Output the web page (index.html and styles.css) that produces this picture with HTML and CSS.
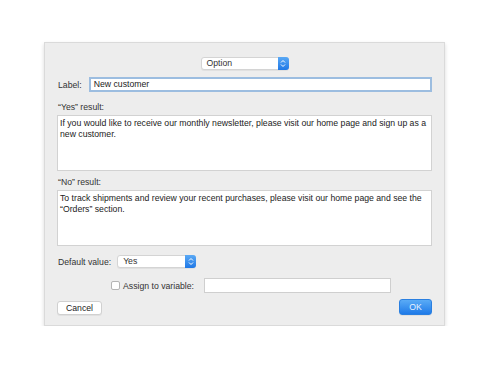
FILE: index.html
```html
<!DOCTYPE html>
<html lang="en">
<head>
    <meta charset="UTF-8">
    <title>Option</title>
    <link rel="stylesheet" href="styles.css">
</head>
<body>
    <div class="dialog">
        <div class="top-row">
            <div class="popup popup-option">
                <span class="popup-text">Option</span>
                <span class="stepper">
                    <svg width="6" height="9" viewBox="0 0 6 9"><path d="M1 3.5 L3 1.5 L5 3.5 M1 5.5 L3 7.5 L5 5.5" fill="none" stroke="#fff" stroke-width="1"/></svg>
                </span>
            </div>
        </div>

        <div class="label-row">
            <span class="field-label">Label:</span>
            <div class="text-field focused">New customer</div>
        </div>

        <div class="section-label">“Yes” result:</div>
        <div class="text-area">If you would like to receive our monthly newsletter, please visit our home page and sign up as a new customer.</div>

        <div class="section-label second">“No” result:</div>
        <div class="text-area">To track shipments and review your recent purchases, please visit our home page and see the “Orders” section.</div>

        <div class="default-row">
            <span class="field-label">Default value:</span>
            <div class="popup popup-default">
                <span class="popup-text">Yes</span>
                <span class="stepper">
                    <svg width="6" height="9" viewBox="0 0 6 9"><path d="M1 3.5 L3 1.5 L5 3.5 M1 5.5 L3 7.5 L5 5.5" fill="none" stroke="#fff" stroke-width="1"/></svg>
                </span>
            </div>
        </div>

        <div class="assign-row">
            <span class="checkbox"></span>
            <span class="field-label">Assign to variable:</span>
            <div class="text-field var-field"></div>
        </div>

        <div class="button-row">
            <div class="button">Cancel</div>
            <div class="button primary">OK</div>
        </div>
    </div>
</body>
</html>
```

FILE: styles.css
```css
body {
    margin: 0;
    background: #fff;
    font-family: "Liberation Sans", Arial, sans-serif;
    font-size: 8.7px;
    color: #333;
}

.dialog {
    margin: 42px 0 0 44px;
    width: 375px;
    padding: 14px 12px 10px 12px;
    background: #ededed;
    border: 1px solid #dadada;
    box-shadow: 0 2px 4px rgba(0, 0, 0, 0.15);
    display: flex;
    flex-direction: column;
}

.top-row {
    display: flex;
    justify-content: center;
}

.popup {
    display: flex;
    align-items: stretch;
    height: 13px;
    background: #fff;
    border: 1px solid #d4d4d4;
    border-radius: 3px;
    box-sizing: border-box;
    box-shadow: 0 1px 0 rgba(0, 0, 0, 0.05);
}

.popup-option {
    width: 88px;
}

.popup-default {
    width: 79px;
    margin-left: 6px;
}

.popup-text {
    flex: 1;
    padding-left: 5px;
    line-height: 11px;
}

.stepper {
    width: 11px;
    margin: -1px -1px -1px 0;
    background: linear-gradient(#5aa9f5, #1f78e6);
    border-radius: 0 3px 3px 0;
    display: flex;
    align-items: center;
    justify-content: center;
}

.label-row {
    display: flex;
    align-items: center;
    margin-top: 7px;
    margin-left: 1px;
}

.text-field {
    background: #fff;
    border: 1px solid #cfcfcf;
    box-sizing: border-box;
    height: 15px;
    line-height: 13px;
    padding-left: 4px;
    color: #222;
}

.label-row .text-field {
    flex: 1;
    margin-left: 7px;
}

.focused {
    border: 2px solid #9cbde0;
    line-height: 11px;
    padding-left: 3px;
}

.section-label {
    margin-top: 10px;
    margin-left: 1px;
    line-height: 11px;
}

.section-label.second {
    margin-top: 6px;
}

.text-area {
    margin-top: 2px;
    height: 56px;
    box-sizing: border-box;
    background: #fff;
    border: 1px solid #d2d2d2;
    padding: 2px 2px;
    line-height: 11px;
    color: #222;
}

.default-row {
    display: flex;
    align-items: center;
    margin-top: 9px;
    margin-left: 1px;
}

.assign-row {
    display: flex;
    align-items: center;
    margin-top: 10px;
    margin-left: 54px;
}

.checkbox {
    width: 7px;
    height: 7px;
    background: #fff;
    border: 1px solid #b5b5b5;
    border-radius: 2px;
    margin-right: 3px;
}

.var-field {
    width: 187px;
    margin-left: 10px;
}

.button-row {
    display: flex;
    justify-content: space-between;
    align-items: flex-end;
    margin-top: 6px;
}

.button {
    height: 12px;
    line-height: 12px;
    padding: 0 8px;
    background: #fff;
    border: 1px solid #d0d0d0;
    border-radius: 3px;
    color: #222;
    box-shadow: 0 1px 0 rgba(0, 0, 0, 0.05);
}

.primary {
    width: 31px;
    height: 14px;
    line-height: 14px;
    padding: 0;
    text-align: center;
    color: #e8f2ff;
    background: linear-gradient(#5aabf6, #1f7ae8);
    border-color: #2a7fe0;
}
```
